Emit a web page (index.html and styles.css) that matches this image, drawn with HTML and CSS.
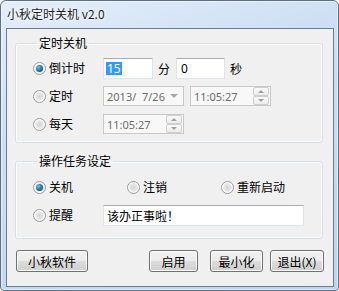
FILE: index.html
```html
<!DOCTYPE html>
<html lang="zh-CN">
<head>
    <meta charset="UTF-8">
    <title>小秋定时关机 v2.0</title>
    <link rel="stylesheet" href="styles.css">
</head>
<body>
    <div class="window">
        <div class="titlebar">小秋定时关机 v2.0</div>

        <div class="client">
            <fieldset class="group timer">
                <legend>定时关机</legend>
                <div class="row">
                    <label class="opt"><span class="radio checked"></span>倒计时</label>
                    <span class="field num"><span class="sel">15</span></span>
                    <span class="unit">分</span>
                    <span class="field num second">0</span>
                    <span class="unit">秒</span>
                </div>
                <div class="row">
                    <label class="opt"><span class="radio"></span>定时</label>
                    <span class="picker">2013/&nbsp; 7/26<span class="drop"></span></span>
                    <span class="picker gap">11:05:27<span class="spin"><i class="up"></i><i class="down"></i></span></span>
                </div>
                <div class="row">
                    <label class="opt"><span class="radio"></span>每天</label>
                    <span class="picker">11:05:27<span class="spin"><i class="up"></i><i class="down"></i></span></span>
                </div>
            </fieldset>

            <fieldset class="group action">
                <legend>操作任务设定</legend>
                <div class="row choices">
                    <label class="opt"><span class="radio checked"></span>关机</label>
                    <label class="opt"><span class="radio"></span>注销</label>
                    <label class="opt"><span class="radio"></span>重新启动</label>
                </div>
                <div class="row">
                    <label class="opt"><span class="radio"></span>提醒</label>
                    <span class="field message">该办正事啦！</span>
                </div>
            </fieldset>

            <div class="buttons">
                <button class="btn about">小秋软件</button>
                <button class="btn start">启用</button>
                <button class="btn min">最小化</button>
                <button class="btn quit">退出(X)</button>
            </div>
        </div>
    </div>
</body>
</html>
```

FILE: styles.css
```css
* {
    margin: 0;
    padding: 0;
    box-sizing: border-box;
}

body {
    font-family: "Noto Sans CJK SC", sans-serif;
    font-size: 12px;
    color: #000;
    background: #fff;
}

.window {
    width: 339px;
    height: 291px;
    display: flex;
    flex-direction: column;
    border: 1px solid #5d6f86;
    border-radius: 6px 6px 4px 4px;
    background: linear-gradient(160deg, #e4eefa 0%, #cddff3 35%, #bdd4ec 100%);
    box-shadow: inset 0 0 0 1px rgba(255, 255, 255, 0.55);
}

.titlebar {
    height: 27px;
    padding: 6px 0 0 6px;
    line-height: 14px;
    color: #1e1e1e;
    text-shadow: 0 0 6px #fff, 0 0 3px #fff;
}

.client {
    flex: 1;
    margin: 0 4px 3px 5px;
    padding: 7px 10px 0 8px;
    background: #f0f0f0;
    border: 1px solid #6c7c92;
}

/* group boxes */

.group {
    border: 1px solid #d5dfe5;
    border-radius: 3px;
    box-shadow: inset 0 0 0 1px #fff;
    padding: 7px 0 7px 17px;
}

.group legend {
    margin-left: 4px;
    padding: 0 2px;
    line-height: 14px;
}

.action {
    margin-top: 11px;
    padding-top: 8px;
    padding-bottom: 12px;
}

.row {
    display: flex;
    align-items: center;
    height: 22px;
}

.row + .row {
    margin-top: 6px;
}

.opt {
    display: flex;
    align-items: center;
    width: 70px;
    line-height: 16px;
}

.choices .opt {
    width: 94px;
}

.choices .opt:last-child {
    width: auto;
}

/* radio buttons */

.radio {
    position: relative;
    width: 13px;
    height: 13px;
    margin-right: 3px;
    border: 1px solid #9a9a9a;
    border-radius: 50%;
    background: radial-gradient(circle at 50% 50%, #d4d4d4 0%, #e8e8e8 45%, #f8f8f8 75%);
    box-shadow: inset 0 0 0 1px #fff;
    flex-shrink: 0;
}

.radio.checked::after {
    content: "";
    position: absolute;
    left: 2px;
    top: 2px;
    width: 7px;
    height: 7px;
    border-radius: 50%;
    background: radial-gradient(circle at 35% 35%, #7cc4e2 0%, #2b7aa3 45%, #0c3e5c 100%);
}

/* text fields */

.field {
    display: flex;
    align-items: center;
    height: 21px;
    padding-left: 2px;
    background: #fff;
    border: 1px solid #dfe3ea;
    border-top-color: #abadb3;
    font-family: "Noto Sans", "Noto Sans CJK SC", sans-serif;
    font-size: 12px;
}

.num {
    width: 50px;
}

.num.second {
    width: 49px;
    padding-left: 4px;
}

.sel {
    background: #3399ff;
    color: #fff;
    line-height: 13px;
    padding: 0 1px;
}

.unit {
    margin: 0 6px 0 5px;
}

.message {
    width: 201px;
    padding-left: 3px;
    font-family: "Noto Sans CJK SC", sans-serif;
}

/* disabled pickers */

.picker {
    position: relative;
    display: flex;
    align-items: center;
    width: 81px;
    height: 20px;
    padding-left: 3px;
    background: #f8f8f8;
    border: 1px solid #c9c9c9;
    color: #6d6d6d;
    font-family: "Noto Sans", sans-serif;
    font-size: 11px;
}

.picker.gap {
    margin-left: 6px;
}

.drop {
    position: absolute;
    right: 5px;
    top: 7px;
    border-left: 4px solid transparent;
    border-right: 4px solid transparent;
    border-top: 4px solid #a8a8a8;
}

.spin {
    position: absolute;
    right: 1px;
    top: 0;
    width: 16px;
    height: 18px;
    display: flex;
    flex-direction: column;
    gap: 0;
}

.spin i {
    position: relative;
    flex: 1;
    border: 1px solid #cfcfcf;
    border-radius: 2px;
    background: linear-gradient(#fafafa, #ececec);
}

.spin i::after {
    content: "";
    position: absolute;
    left: 4px;
    border-left: 3px solid transparent;
    border-right: 3px solid transparent;
}

.spin .up::after {
    top: 2px;
    border-bottom: 3px solid #a0a0a0;
}

.spin .down::after {
    top: 2px;
    border-top: 3px solid #a0a0a0;
}

/* buttons */

.buttons {
    display: flex;
    margin-top: 11px;
    padding-left: 1px;
}

.btn {
    height: 22px;
    font-family: "Noto Sans CJK SC", sans-serif;
    font-size: 12px;
    color: #000;
    border: 1px solid #707070;
    border-radius: 3px;
    background: linear-gradient(#f2f2f2 0%, #ebebeb 50%, #dddddd 50%, #cfcfcf 100%);
    box-shadow: inset 0 0 0 1px #fcfcfc;
}

.about {
    width: 72px;
}

.start {
    width: 49px;
    margin-left: auto;
}

.min {
    width: 53px;
    margin-left: 12px;
}

.quit {
    width: 54px;
    margin-left: 7px;
    margin-right: -1px;
}
```
